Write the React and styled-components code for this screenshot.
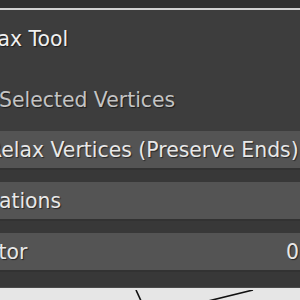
import React from 'react';
import styled, { createGlobalStyle } from 'styled-components';

const GlobalStyle = createGlobalStyle`
	body {
		margin: 0;
		background: #3d3d3d;
		font-family: "DejaVu Sans", "Liberation Sans", sans-serif;
	}
`;

const Screen = styled.div`
	width: 300px;
	height: 300px;
	overflow: hidden;
	display: flex;
	flex-direction: column;
	background: #3d3d3d;
`;

const TopStrip = styled.div`
	height: 8px;
	flex: none;
	background: #2e2e2e;
	border-bottom: 2px solid #cfcfcf;
`;

const Panel = styled.div`
	width: 350px;
	margin-left: -40px;
	display: flex;
	flex-direction: column;
	font-size: 20.4px;
	line-height: 24px;
	text-shadow: 1px 1px 1px rgba(0, 0, 0, 0.55);
	white-space: nowrap;
`;

const Title = styled.div`
	margin-top: 17px;
	padding-left: 6px;
	color: #f0f0f0;
`;

const Label = styled.div`
	margin-top: 37px;
	padding-left: 39px;
	color: #c4c4c4;
`;

const FieldList = styled.div`
	margin-top: 19px;
	display: flex;
	flex-direction: column;
	gap: 14px;
	padding-bottom: 17px;
	background: #383838;
`;

const Field = styled.div`
	height: 37px;
	display: flex;
	align-items: center;
	justify-content: space-between;
	padding: 0 11px 0 ${p => p.indent}px;
	background: #545454;
	color: #e8e8e8;
	box-shadow: 0 2px 0 #323232;
`;

const Viewport = styled.div`
	flex: 1;
	background: #e6e6e6;
	border-top: 1px solid #4a4a4a;
`;

function App() {
	return (
		<Screen>
			<GlobalStyle />
			<TopStrip />
			<Panel>
				<Title>Relax Tool</Title>
				<Label>Selected Vertices</Label>
				<FieldList>
					<Field indent={28}>
						<span>Relax Vertices (Preserve Ends)</span>
					</Field>
					<Field indent={4}>
						<span>Iterations</span>
					</Field>
					<Field indent={5}>
						<span>Factor</span>
						<span>0</span>
					</Field>
				</FieldList>
			</Panel>
			<Viewport>
				<svg width="300" height="13" viewBox="0 0 300 13">
					<line x1="136" y1="0" x2="142" y2="13" stroke="#111" strokeWidth="1.6" />
					<line x1="253" y1="0" x2="200" y2="13" stroke="#111" strokeWidth="1.6" />
				</svg>
			</Viewport>
		</Screen>
	);
}

export default App;
